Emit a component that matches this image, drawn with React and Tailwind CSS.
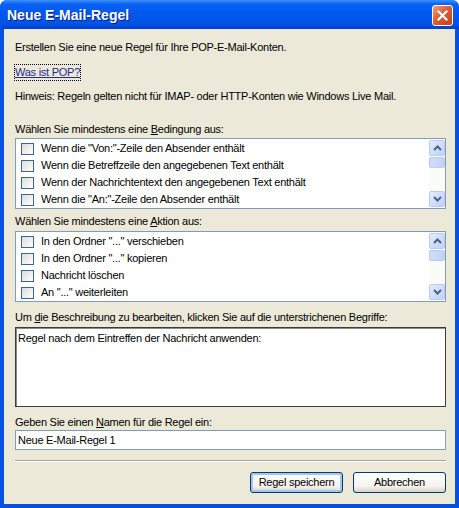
import React from "react";

const conditions = [
  'Wenn die "Von:"-Zeile den Absender enthält',
  "Wenn die Betreffzeile den angegebenen Text enthält",
  "Wenn der Nachrichtentext den angegebenen Text enthält",
  'Wenn die "An:"-Zeile den Absender enthält',
];

const actions = [
  'In den Ordner "..." verschieben',
  'In den Ordner "..." kopieren',
  "Nachricht löschen",
  'An "..." weiterleiten',
];

function Arrow({ up }) {
  return (
    <svg width="9" height="6" viewBox="0 0 9 6">
      <path
        d={up ? "M1 5 L4.5 1.5 L8 5" : "M1 1 L4.5 4.5 L8 1"}
        fill="none"
        stroke="#4D6185"
        strokeWidth="2"
      />
    </svg>
  );
}

function ScrollBar() {
  return (
    <div className="w-[16px] flex flex-col bg-[#FBFBF8] py-[1px]">
      <div className="h-[16px] rounded-[2px] border border-[#B9CCF3] bg-[linear-gradient(135deg,#E3ECFE,#BDD0FA)] flex items-center justify-center">
        <Arrow up />
      </div>
      <div className="h-[11px] mt-[1px] rounded-[2px] border border-[#B9CCF3] bg-[linear-gradient(90deg,#CFDCFC,#C1D3FB)]" />
      <div className="flex-1" />
      <div className="h-[16px] rounded-[2px] border border-[#B9CCF3] bg-[linear-gradient(135deg,#E3ECFE,#BDD0FA)] flex items-center justify-center">
        <Arrow />
      </div>
    </div>
  );
}

function CheckList({ items }) {
  return (
    <div className="h-[71px] border border-[#7F9DB9] bg-white flex">
      <div className="flex-1 pt-[1px]">
        {items.map((t, i) => (
          <div key={i} className="h-[17px] flex items-center pl-[5px] gap-[7px]">
            <span className="w-[13px] h-[12px] border border-[#3A669C] bg-[linear-gradient(135deg,#DCDCD7,#FFFFFF)]" />
            <span>{t}</span>
          </div>
        ))}
      </div>
      <ScrollBar />
    </div>
  );
}

function XPButton({ children, isDefault }) {
  return (
    <button
      className={
        "w-[93px] h-[21px] rounded-[3px] border border-[#003C74] bg-[linear-gradient(to_bottom,#FFFFFF,#F4F3EE_70%,#D6D0C5)] text-black text-[11px] " +
        (isDefault ? "shadow-[inset_0_0_0_2px_#A6C4F2]" : "")
      }
    >
      {children}
    </button>
  );
}

export default function App() {
  return (
    <div className="w-[459px] h-[508px] bg-[#0551E0] rounded-t-[7px] flex flex-col font-['Liberation_Sans',Arial,sans-serif] text-[11px] tracking-[-0.25px] text-black leading-[13px]">
      {/* Title bar */}
      <div className="h-[29px] rounded-t-[7px] bg-[linear-gradient(to_bottom,#3D93FF_0%,#0A62F4_14%,#0058EE_45%,#0054E6_80%,#003FCD_100%)] flex items-center justify-between pl-[7px] pr-[6px]">
        <span className="text-white font-bold text-[14px] tracking-normal [text-shadow:1px_1px_0_#0A1E8A] pt-[2px]">
          Neue E-Mail-Regel
        </span>
        <div className="w-[21px] h-[21px] rounded-[3px] border border-white bg-[linear-gradient(135deg,#F0A080,#E25B38_45%,#C93D1A)] flex items-center justify-center mt-[1px]">
          <svg width="11" height="11" viewBox="0 0 11 11">
            <path d="M1.5 1.5 L9.5 9.5 M9.5 1.5 L1.5 9.5" stroke="white" strokeWidth="2.2" strokeLinecap="square" />
          </svg>
        </div>
      </div>

      {/* Body */}
      <div className="flex-1 mx-[4px] mb-[4px] bg-[#ECE9D8] pl-[11px] pr-[9px] pt-[12px] flex flex-col">
        <p>Erstellen Sie eine neue Regel für Ihre POP-E-Mail-Konten.</p>
        <div className="mt-[11px] flex">
          <span className="text-[#1F2C8F] underline outline-1 outline-dotted outline-black py-[1px]">
            Was ist POP?
          </span>
        </div>
        <p className="mt-[10px]">
          Hinweis: Regeln gelten nicht für IMAP- oder HTTP-Konten wie Windows Live Mail.
        </p>

        <p className="mt-[20px] mb-[2px]">
          Wählen Sie mindestens eine <u>B</u>edingung aus:
        </p>
        <CheckList items={conditions} />

        <p className="mt-[6px] mb-[3px]">
          Wählen Sie mindestens eine <u>A</u>ktion aus:
        </p>
        <CheckList items={actions} />

        <p className="mt-[9px] mb-[3px]">
          Um <u>d</u>ie Beschreibung zu bearbeiten, klicken Sie auf die unterstrichenen Begriffe:
        </p>
        <div className="h-[80px] border border-[#3C3C3C] shadow-[inset_1px_1px_0_#8A8A8A] bg-white px-[2px] pt-[4px]">
          Regel nach dem Eintreffen der Nachricht anwenden:
        </div>

        <p className="mt-[9px] mb-[1px]">
          Geben Sie einen <u>N</u>amen für die Regel ein:
        </p>
        <div className="h-[20px] border border-[#7F9DB9] bg-white flex items-center px-[2px]">
          Neue E-Mail-Regel 1
        </div>

        <div className="mt-[10px] border-t border-[#ACA899] border-b border-b-white" />

        <div className="mt-[10px] flex justify-end gap-[10px]">
          <XPButton isDefault>Regel speichern</XPButton>
          <XPButton>Abbrechen</XPButton>
        </div>
      </div>
    </div>
  );
}
